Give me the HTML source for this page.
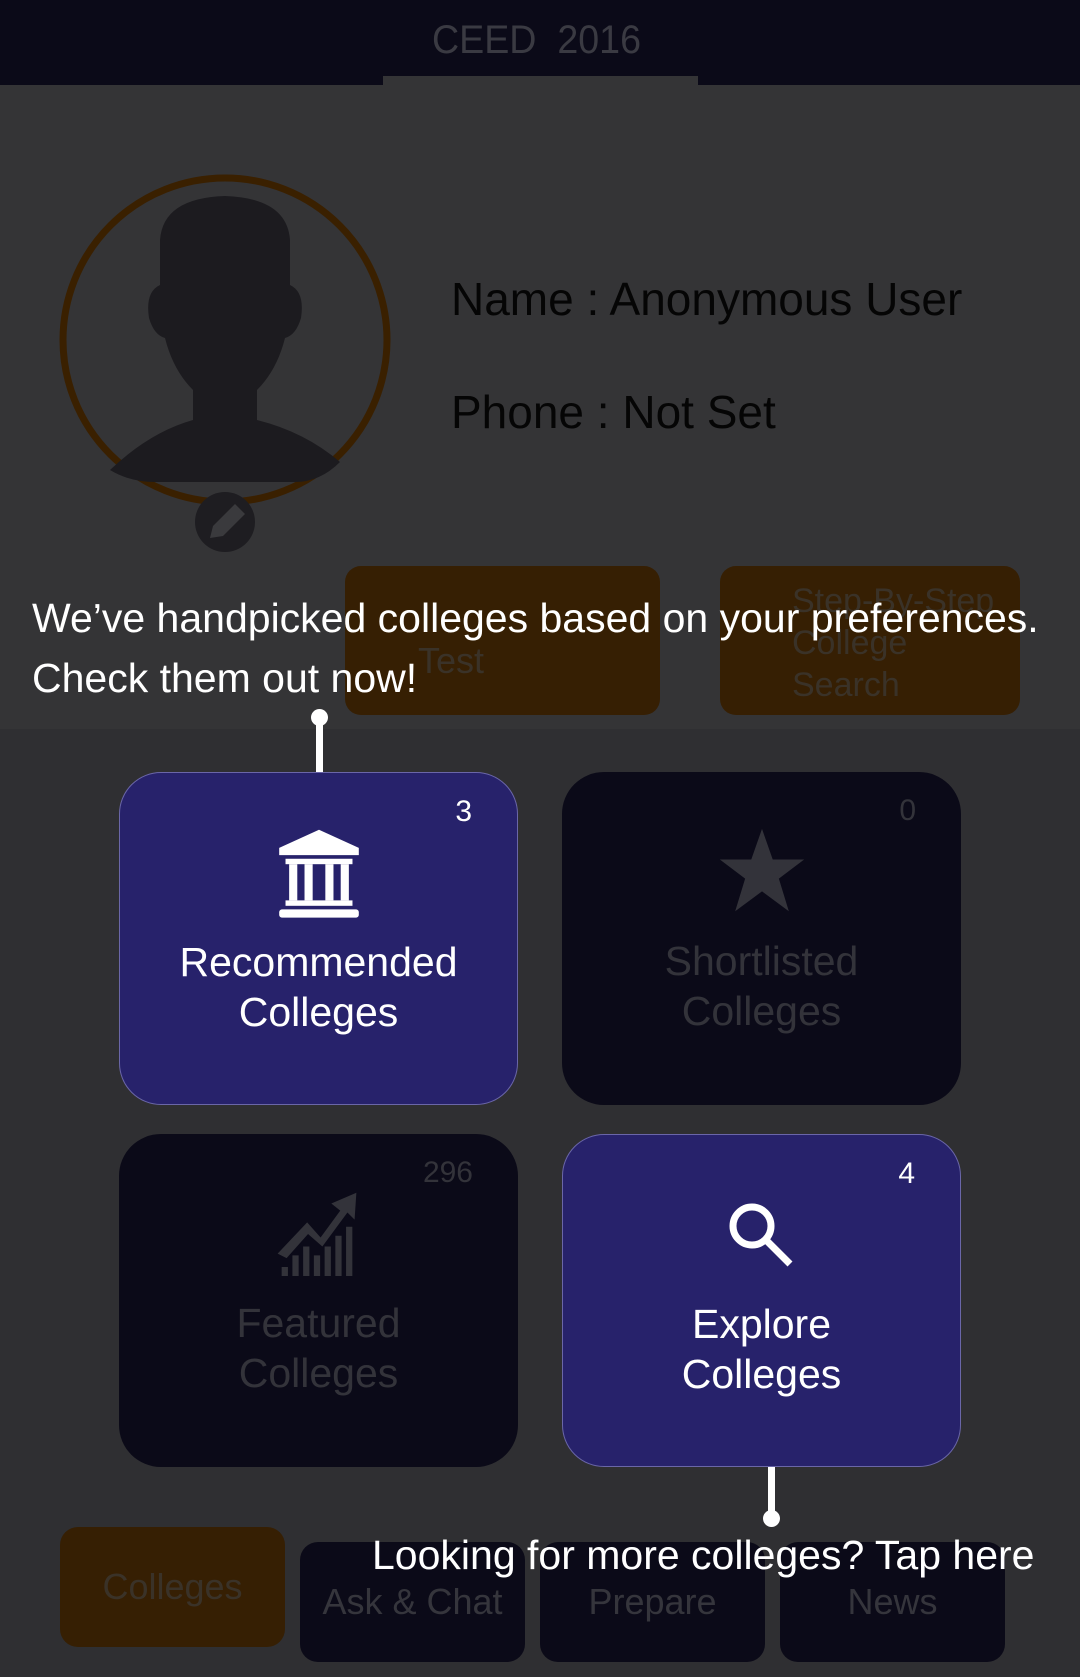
<!DOCTYPE html>
<html><head><meta charset="utf-8"><style>
*{margin:0;padding:0;box-sizing:border-box}
body{width:1080px;height:1677px;overflow:hidden;background:#2f2f32;font-family:"Liberation Sans",sans-serif;position:relative}
.a{position:absolute}
.t{white-space:nowrap;transform-origin:left center}
.card{position:absolute;width:399px;height:333px;border-radius:42px;text-align:center}
.blue{background:#27226b;border:1px solid #6a66a8}
.dark{background:#0b0a18}
.lbl{position:absolute;left:0;right:0;top:164px;font-size:41px;line-height:50px}
.num{position:absolute;right:45px;top:22px;font-size:30px}
.nav{position:absolute;width:225px;height:120px;border-radius:18px;font-size:36px;text-align:center;line-height:120px;color:#35353c}
</style></head><body>
<div class="a" style="left:0;top:0;width:1080px;height:729px;background:#343436"></div>
<div class="a" style="left:0;top:0;width:1080px;height:85px;background:#0b0a18"></div>
<div class="a" style="left:383px;top:76px;width:315px;height:9px;background:#343436"></div>
<div class="a t" style="left:432px;top:18px;font-size:40px;color:#3a3a42;transform:scaleX(.94)">CEED&nbsp; 2016</div>

<svg class="a" style="left:55px;top:170px" width="340" height="390" viewBox="0 0 340 390">
<circle cx="170" cy="170" r="162" fill="none" stroke="#3a2000" stroke-width="7"/>
<path d="M105 70 Q108 28 170 26 Q232 28 235 70 L235 115 Q250 122 246 148 Q241 165 230 168 Q222 200 202 220 L202 250 Q250 262 285 292 Q265 312 240 312 L100 312 Q75 312 55 300 Q95 262 138 250 L138 220 Q118 200 110 168 Q99 165 94 148 Q90 122 105 115 Z" fill="#1c1b1f"/>
<circle cx="170" cy="352" r="30" fill="#1e1d21"/>
<path d="M155 368 L158 356 L180 334 L190 344 L168 366 Z" fill="#3a3a3d"/>
</svg>

<div class="a t" style="left:451px;top:272px;font-size:46px;color:#050505">Name : Anonymous User</div>
<div class="a t" style="left:451px;top:385px;font-size:46px;color:#050505">Phone : Not Set</div>

<div class="a" style="left:345px;top:566px;width:315px;height:149px;border-radius:16px;background:#361f03"></div>
<div class="a" style="left:720px;top:566px;width:300px;height:149px;border-radius:16px;background:#361f03"></div>
<div class="a t" style="left:418px;top:640px;font-size:36px;color:#3a3228">Test</div>
<div class="a" style="left:792px;top:580px;font-size:34px;line-height:42px;color:#3a3228">Step-By-Step<br>College<br>Search</div>

<div class="a t" style="left:32px;top:595px;font-size:41px;color:#fff">We’ve handpicked colleges based on your preferences.</div>
<div class="a t" style="left:32px;top:655px;font-size:41px;color:#fff">Check them out now!</div>
<div class="a" style="left:311px;top:709px;width:17px;height:17px;border-radius:50%;background:#fff"></div>
<div class="a" style="left:316px;top:715px;width:7px;height:58px;background:#fff"></div>

<div class="card blue" style="left:119px;top:772px">
<div class="num" style="color:#fff">3</div>
<svg class="a" style="left:154px;top:55px" width="90" height="95" viewBox="0 0 90 105">
<path d="M45 2 L89 22 L89 30 L1 30 L1 22 Z" fill="#fff"/>
<rect x="8" y="34" width="74" height="6" fill="#fff"/>
<rect x="12" y="40" width="9" height="40" fill="#fff"/><rect x="29" y="40" width="9" height="40" fill="#fff"/><rect x="52" y="40" width="9" height="40" fill="#fff"/><rect x="69" y="40" width="9" height="40" fill="#fff"/>
<rect x="8" y="80" width="74" height="6" fill="#fff"/>
<rect x="1" y="90" width="88" height="9" rx="3" fill="#fff"/>
</svg>
<div class="lbl" style="color:#fff">Recommended<br>Colleges</div></div>

<div class="card dark" style="left:562px;top:772px">
<div class="num" style="color:#33333a">0</div>
<svg class="a" style="left:154px;top:53px" width="92" height="92" viewBox="0 0 24 24"><path d="M12 1 L14.8 9 L23 9 L16.4 14 L19 22.5 L12 17.3 L5 22.5 L7.6 14 L1 9 L9.2 9 Z" fill="#33333a"/></svg>
<div class="lbl" style="color:#33333a">Shortlisted<br>Colleges</div></div>

<div class="card dark" style="left:119px;top:1134px">
<div class="num" style="color:#33333a">296</div>
<svg class="a" style="left:152px;top:57px" width="92" height="85" viewBox="0 0 92 95">
<path d="M2 70 L35 35 L50 52 L72 22 L62 14 L90 2 L88 32 L80 24 L52 62 L36 48 L12 75 Z" fill="#33333a"/>
<path d="M10 95 L10 85 M22 95 L22 72 M34 95 L34 62 M46 95 L46 72 M58 95 L58 62 M70 95 L70 50 M82 95 L82 40" stroke="#33333a" stroke-width="7"/>
</svg>
<div class="lbl" style="color:#33333a">Featured<br>Colleges</div></div>

<div class="card blue" style="left:562px;top:1134px">
<div class="num" style="color:#fff">4</div>
<svg class="a" style="left:163px;top:65px" width="70" height="70" viewBox="0 0 70 70">
<circle cx="26" cy="26" r="19" fill="none" stroke="#fff" stroke-width="7"/>
<path d="M40 40 L64 64" stroke="#fff" stroke-width="7"/></svg>
<div class="lbl" style="color:#fff">Explore<br>Colleges</div></div>

<div class="a" style="left:768px;top:1467px;width:7px;height:45px;background:#fff"></div>
<div class="a" style="left:763px;top:1510px;width:17px;height:17px;border-radius:50%;background:#fff"></div>

<div class="nav" style="left:60px;top:1527px;background:#361f03;color:#3a3228">Colleges</div>
<div class="nav dark" style="left:300px;top:1542px">Ask &amp; Chat</div>
<div class="nav dark" style="left:540px;top:1542px">Prepare</div>
<div class="nav dark" style="left:780px;top:1542px">News</div>
<div class="a t" style="left:372px;top:1532px;font-size:41px;color:#fff">Looking for more colleges? Tap here</div>
</body></html>
